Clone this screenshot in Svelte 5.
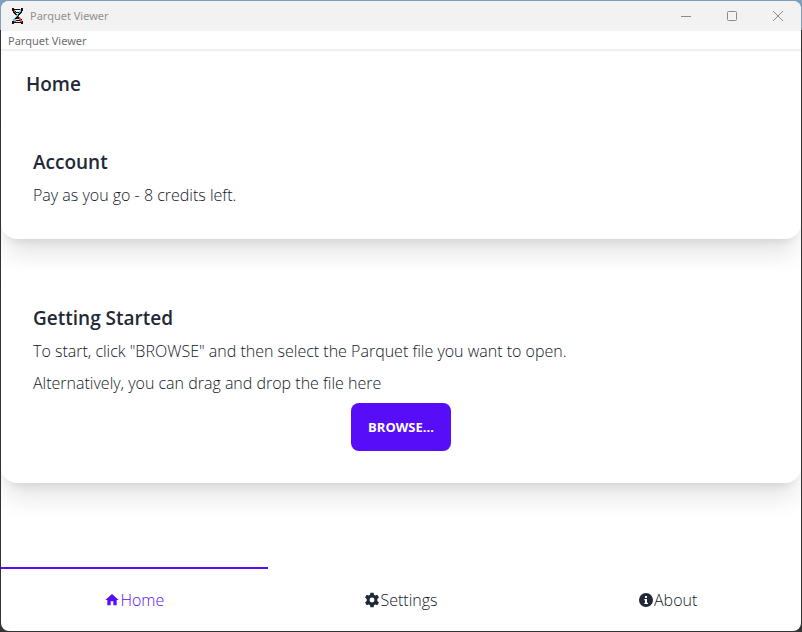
<script lang="ts">
  type Tab = 'home' | 'settings' | 'about';

  const tabs: { id: Tab; label: string }[] = [
    { id: 'home', label: 'Home' },
    { id: 'settings', label: 'Settings' },
    { id: 'about', label: 'About' },
  ];

  let active = $state<Tab>('home');
  let credits = $state(8);
</script>

<div class="window">
  <header class="titlebar">
    <svg class="logo" width="11" height="16" viewBox="0 0 11 16" fill="none" shape-rendering="crispEdges" aria-hidden="true">
      <path d="M0 0h2v1h7V0h2v3h-1v2H9v1H8v1H7v2h1v1h1v1h1v2h1v3H9v-1H2v1H0v-3h1v-2h1v-1h1V9h1V7H3V6H2V5H1V3H0z" fill="#111" />
      <path d="M2 2h6v1H7v1H4V3H2zM4 5h3v1H4zM4 11h3v1H4zM3 13h5v1H3z" fill="#f2f2f2" />
      <path d="M8 1h1v3H8v1H7v1H6v2H5v1H4v1H3v1H2v2H1v-2h1v-1h1V9h1V7h1V6h1V5h1V3h1zM2 11h2v2H2z" fill="#5cc8e4" />
      <path d="M2 2h1v2h1v1H3V4H2zM6 8h1v1h1v1h1v2h1v2H8v-2H7V9H6zM2 13h2v1H2z" fill="#ed4a3d" />
    </svg>
    <span class="title">Parquet Viewer</span>
    <div class="controls">
      <button type="button" aria-label="Minimize">
        <svg width="12" height="12" viewBox="0 0 12 12"><path d="M1 6.5h10" /></svg>
      </button>
      <button type="button" aria-label="Maximize">
        <svg width="12" height="12" viewBox="0 0 12 12"><rect x="1.5" y="1.5" width="9" height="9" rx="1" /></svg>
      </button>
      <button type="button" aria-label="Close">
        <svg width="12" height="12" viewBox="0 0 12 12"><path d="M1 1l10 10M11 1L1 11" /></svg>
      </button>
    </div>
  </header>

  <div class="menubar">
    <button type="button">Parquet Viewer</button>
  </div>

  <div class="navbar">
    <h1>Home</h1>
  </div>

  <main>
    <section class="card">
      <h2>Account</h2>
      <p>Pay as you go - {credits} credits left.</p>
    </section>

    <section class="card">
      <h2>Getting Started</h2>
      <p>To start, click "BROWSE" and then select the Parquet file you want to open.</p>
      <p>Alternatively, you can drag and drop the file here</p>
      <div class="card-actions">
        <button type="button" class="btn-primary">BROWSE...</button>
      </div>
    </section>
  </main>

  <nav class="tabs">
    {#each tabs as tab (tab.id)}
      <button type="button" class:active={active === tab.id} onclick={() => (active = tab.id)}>
        <svg width="16" height="16" viewBox="0 0 24 24" fill="currentColor" aria-hidden="true">
          {#if tab.id === 'home'}
            <path d="M10 20v-6h4v6h5v-8h3L12 3 2 12h3v8z" />
          {:else if tab.id === 'settings'}
            <path
              fill-rule="evenodd"
              d="M9.6 1h4.8l.6 3.2 1.9 1.1L20 4.200l2.400 4.100L20 10.500v3l2.400 2.200L20 19.800l-3.100-1.100-1.900 1.100-.6 3.200H9.600L9 19.800l-1.900-1.100L4 19.800l-2.400-4.100L4 13.500v-3L1.600 8.300 4 4.200l3.100 1.100L9 4.200zM12 8.300a3.700 3.700 0 1 0 0 7.400 3.700 3.700 0 0 0 0-7.400z"
            />
          {:else}
            <path
              fill-rule="evenodd"
              d="M12 1.500a10.500 10.500 0 1 0 0 21 10.500 10.500 0 0 0 0-21zM10.500 6h3v3h-3zM9.500 10.500h4V16H15v2H9.500v-2h1v-3.500h-1z"
            />
          {/if}
        </svg>
        <span>{tab.label}</span>
      </button>
    {/each}
  </nav>
</div>

<style>
  :global(body) {
    margin: 0;
    background: linear-gradient(#7f9fbb 30px, #333 30px);
  }

  .window {
    display: flex;
    flex-direction: column;
    box-sizing: border-box;
    min-height: 100vh;
    border: 1px solid transparent;
    border-radius: 9px;
    background: #fff padding-box;
    overflow: hidden;
    font-family: 'Open Sans', 'Noto Sans', sans-serif;
    font-size: 16px;
    font-weight: 300;
    line-height: 24px;
    color: #111827;
  }

  button {
    margin: 0;
    padding: 0;
    border: 0;
    background: none;
    font: inherit;
    color: inherit;
    cursor: pointer;
  }

  h1,
  h2,
  p {
    margin: 0;
  }

  h1,
  h2 {
    font-size: 19px;
    font-weight: 600;
    line-height: 30px;
    color: #1f2937;
  }

  .titlebar {
    display: flex;
    align-items: center;
    height: 30px;
    padding-left: 11px;
    background: #f2f2f2;
  }

  .title {
    margin-left: 7px;
    font-family: 'Noto Sans', sans-serif;
    font-size: 11px;
    font-weight: 400;
    color: #909090;
  }

  .controls {
    display: flex;
    margin-left: auto;
  }

  .controls button {
    display: flex;
    align-items: center;
    justify-content: center;
    width: 46px;
    height: 30px;
  }

  .controls svg {
    fill: none;
    stroke: #8a8a8a;
  }

  .menubar {
    display: flex;
    height: 18px;
    padding-left: 7px;
    border-bottom: 2px solid #f0f0f0;
  }

  .menubar button {
    font-family: 'Noto Sans', sans-serif;
    font-size: 11px;
    font-weight: 400;
    line-height: 20px;
    color: #6d6d6d;
  }

  .navbar {
    display: flex;
    align-items: center;
    min-height: 62px;
    padding: 2px 25px 0;
  }

  main {
    display: flex;
    flex-direction: column;
    gap: 32px;
  }

  .card {
    display: flex;
    flex-direction: column;
    gap: 8px;
    padding: 32px;
    border-radius: 16px;
    background: #fff;
    box-shadow:
      0 20px 25px -5px rgb(0 0 0 / 10%),
      0 8px 10px -6px rgb(0 0 0 / 10%);
  }

  .card h2 {
    margin-bottom: -2px;
  }

  .card-actions {
    display: flex;
    justify-content: center;
  }

  .btn-primary {
    height: 48px;
    padding: 0 17px;
    border-radius: 8px;
    background: #570df8;
    font-size: 13px;
    font-weight: 700;
    color: #fff;
  }

  .tabs {
    display: grid;
    grid-template-columns: repeat(3, 1fr);
    margin-top: auto;
  }

  .tabs button {
    display: flex;
    align-items: center;
    justify-content: center;
    height: 64px;
    border-top: 2px solid transparent;
  }

  .tabs button.active {
    border-color: #570df8;
    color: #570df8;
  }

  .tabs svg {
    color: #1f2937;
  }

  .tabs .active svg {
    color: #570df8;
  }
</style>
